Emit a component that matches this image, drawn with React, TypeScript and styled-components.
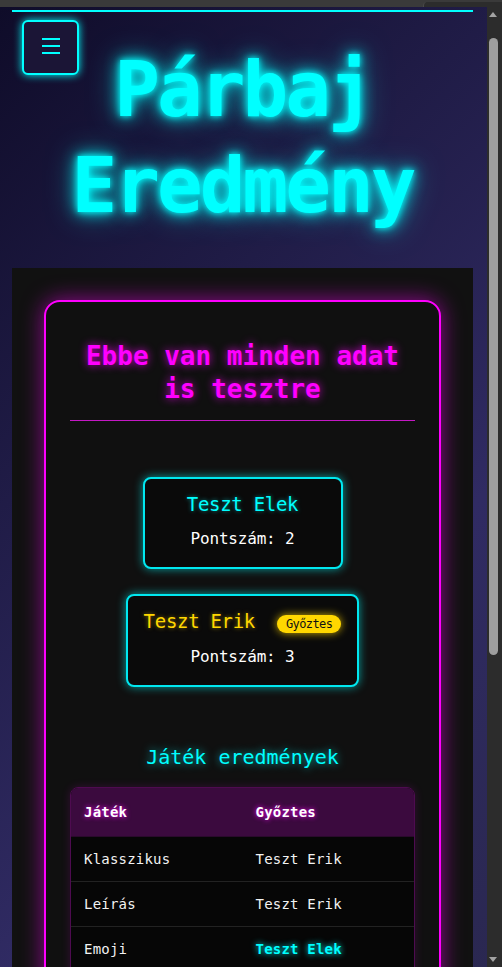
import React from "react";
import styled, { createGlobalStyle } from "styled-components";

const GlobalStyle = createGlobalStyle`
  html, body {
    margin: 0;
    padding: 0;
    height: 100%;
    overflow: hidden;
    background: #3a3a3a;
  }
  body {
    font-family: "DejaVu Sans Mono", monospace;
    color: #fff;
  }
  * {
    box-sizing: border-box;
  }
`;

type Game = { name: string; winner: string; highlight?: boolean };

const games: Game[] = [
  { name: "Klasszikus", winner: "Teszt Erik" },
  { name: "Leírás", winner: "Teszt Erik" },
  { name: "Emoji", winner: "Teszt Elek", highlight: true },
  { name: "Kép", winner: "Teszt Elek", highlight: true },
  { name: "Zene", winner: "Teszt Erik" },
];

export default function App() {
  return (
    <>
      <GlobalStyle />
      <Shell>
        <TopStrip>
          <TopTab />
        </TopStrip>
        <Body>
          <Viewport>
            <Page>
              <Container>
                <Header>
                  <MenuButton aria-label="menu">
                    <svg width="18" height="16" viewBox="0 0 18 16">
                      <line x1="0" y1="1" x2="18" y2="1" stroke="#00ffff" strokeWidth="2" />
                      <line x1="0" y1="8" x2="18" y2="8" stroke="#00ffff" strokeWidth="2" />
                      <line x1="0" y1="15" x2="18" y2="15" stroke="#00ffff" strokeWidth="2" />
                    </svg>
                  </MenuButton>
                  <Title>Párbaj Eredmény</Title>
                </Header>

                <Main>
                  <ResultCard>
                    <CardTitle>Ebbe van minden adat is tesztre</CardTitle>

                    <Players>
                      <PlayerCard>
                        <NameRow>
                          <PlayerName>Teszt Elek</PlayerName>
                        </NameRow>
                        <Score>Pontszám: 2</Score>
                      </PlayerCard>
                      <PlayerCard>
                        <NameRow>
                          <PlayerName $winner>Teszt Erik</PlayerName>
                          <WinnerBadge>Győztes</WinnerBadge>
                        </NameRow>
                        <Score>Pontszám: 3</Score>
                      </PlayerCard>
                    </Players>

                    <SectionTitle>Játék eredmények</SectionTitle>
                    <TableWrap>
                      <Table>
                        <thead>
                          <tr>
                            <Th>Játék</Th>
                            <Th>Győztes</Th>
                          </tr>
                        </thead>
                        <tbody>
                          {games.map((g) => (
                            <tr key={g.name}>
                              <Td>{g.name}</Td>
                              <Td $highlight={g.highlight}>{g.winner}</Td>
                            </tr>
                          ))}
                        </tbody>
                      </Table>
                    </TableWrap>
                  </ResultCard>
                </Main>
              </Container>
            </Page>
          </Viewport>

          <ScrollRail>
            <ArrowButton>
              <Arrow />
            </ArrowButton>
            <Track>
              <Thumb />
            </Track>
            <ArrowButton>
              <Arrow $down />
            </ArrowButton>
          </ScrollRail>
        </Body>
      </Shell>
    </>
  );
}

const Shell = styled.div`
  height: 100vh;
  display: flex;
  flex-direction: column;
`;

const TopStrip = styled.div`
  height: 7px;
  flex-shrink: 0;
  background: #3a3a3a;
  display: flex;
  justify-content: flex-end;
`;

const TopTab = styled.div`
  width: 79px;
  margin-top: 2px;
  background: #2c2c2c;
  border-top-left-radius: 4px;
  border-left: 1px solid #4a4a4a;
`;

const Body = styled.div`
  flex: 1;
  min-height: 0;
  display: flex;
`;

const Viewport = styled.div`
  flex: 1;
  min-width: 0;
  overflow: hidden;
`;

const ScrollRail = styled.div`
  width: 15px;
  flex-shrink: 0;
  padding: 0 4px 0 1px;
  background: #2c2c2c;
  display: flex;
  flex-direction: column;
  align-items: center;
`;

const ArrowButton = styled.div`
  height: 15px;
  width: 100%;
  flex-shrink: 0;
  display: flex;
  align-items: center;
  justify-content: center;
`;

const Arrow = styled.div<{ $down?: boolean }>`
  width: 0;
  height: 0;
  border-left: 4.5px solid transparent;
  border-right: 4.5px solid transparent;
  ${(p) =>
    p.$down ? "border-top: 5px solid #a3a3a3;" : "border-bottom: 5px solid #a3a3a3;"}
`;

const Track = styled.div`
  flex: 1;
  width: 100%;
  padding-top: 16px;
  display: flex;
  justify-content: center;
`;

const Thumb = styled.div`
  width: 9px;
  height: 617px;
  background: #9e9e9e;
  border-radius: 5px;
`;

const Page = styled.div`
  min-height: 1455px;
  padding-top: 3px;
  background: linear-gradient(135deg, #0f0c29 0%, #302b63 50%, #24243e 100%);
`;

const Container = styled.div`
  margin: 0 14px 0 12px;
  border-top: 2px solid #00ffff;
`;

const Header = styled.header`
  position: relative;
  padding: 30px 0 34px;
  text-align: center;
`;

const MenuButton = styled.button`
  position: absolute;
  top: 8px;
  left: 10px;
  width: 57px;
  height: 55px;
  padding: 0 0 3px;
  display: flex;
  align-items: center;
  justify-content: center;
  background: #1b1536;
  border: 2px solid #00ffff;
  border-radius: 6px;
  box-shadow: 0 0 8px #00ffff;
  cursor: pointer;
`;

const Title = styled.h1`
  margin: 0;
  font-family: "DejaVu Sans Mono", monospace;
  font-size: 76px;
  font-weight: bold;
  line-height: 96px;
  letter-spacing: -3px;
  color: #00ffff;
  text-shadow: 0 0 6px #00ffff, 0 0 16px #00ffff, 0 0 30px rgba(0, 255, 255, 0.5);
`;

const Main = styled.main`
  background: #111111;
  padding: 32px;
`;

const ResultCard = styled.section`
  background: #101010;
  border: 2px solid #ff00ff;
  border-radius: 16px;
  padding: 24px;
  box-shadow: 0 0 22px rgba(255, 0, 255, 0.55);
`;

const CardTitle = styled.h2`
  margin: 14px 0 0;
  padding-bottom: 14px;
  border-bottom: 1px solid #c418c4;
  text-align: center;
  font-size: 26px;
  line-height: 33px;
  font-weight: bold;
  color: #ff00ff;
  text-shadow: 0 0 8px rgba(255, 0, 255, 0.8);
`;

const Players = styled.div`
  margin-top: 56px;
  display: flex;
  flex-direction: column;
  align-items: center;
  gap: 25px;
`;

const PlayerCard = styled.div`
  min-width: 200px;
  padding: 14px 16px 19px;
  background: #0a0a0a;
  border: 2px solid #00e8f0;
  border-radius: 8px;
  box-shadow: 0 0 10px rgba(0, 255, 255, 0.6);
  display: flex;
  flex-direction: column;
  align-items: center;
`;

const NameRow = styled.div`
  display: flex;
  align-items: baseline;
  justify-content: center;
`;

const PlayerName = styled.span<{ $winner?: boolean }>`
  font-size: 19px;
  line-height: 22px;
  letter-spacing: -0.3px;
  color: ${(p) => (p.$winner ? "#ffd700" : "#00ffff")};
  text-shadow: 0 0 4px
    ${(p) => (p.$winner ? "rgba(255, 215, 0, 0.5)" : "rgba(0, 255, 255, 0.5)")};
`;

const WinnerBadge = styled.span`
  margin-left: 22px;
  padding: 2px 9px;
  font-size: 12px;
  line-height: 14px;
  letter-spacing: -0.6px;
  color: #111;
  background: #ffd700;
  border-radius: 10px;
  box-shadow: 0 0 8px rgba(255, 215, 0, 0.8);
`;

const Score = styled.p`
  margin: 14px 0 0;
  font-size: 16px;
  line-height: 19px;
  letter-spacing: -0.2px;
  color: #ffffff;
`;

const SectionTitle = styled.h3`
  margin: 58px 0 18px;
  text-align: center;
  font-size: 20px;
  line-height: 24px;
  font-weight: normal;
  color: #00ffff;
  text-shadow: 0 0 8px rgba(0, 255, 255, 0.7);
`;

const TableWrap = styled.div`
  border: 1px solid #4e0b50;
  border-radius: 8px;
  overflow: hidden;
  box-shadow: 0 0 10px rgba(255, 0, 255, 0.15);
`;

const Table = styled.table`
  width: 100%;
  border-collapse: collapse;
  table-layout: fixed;
`;

const Th = styled.th`
  width: 50%;
  padding: 16px 13px;
  text-align: left;
  font-size: 14px;
  line-height: 16px;
  letter-spacing: 0.2px;
  font-weight: bold;
  color: #ffffff;
  background: #3b0a3e;
  border-bottom: 1px solid #2a0a2c;
  text-shadow: 0 0 5px #ff00ff;
`;

const Td = styled.td<{ $highlight?: boolean }>`
  padding: 14px 13px;
  font-size: 14px;
  line-height: 16px;
  letter-spacing: 0.2px;
  background: #060606;
  border-bottom: 1px solid #222;
  font-weight: ${(p) => (p.$highlight ? "bold" : "normal")};
  color: ${(p) => (p.$highlight ? "#00ffff" : "#f2f2f2")};
  text-shadow: ${(p) => (p.$highlight ? "0 0 6px #00ffff" : "none")};
`;
